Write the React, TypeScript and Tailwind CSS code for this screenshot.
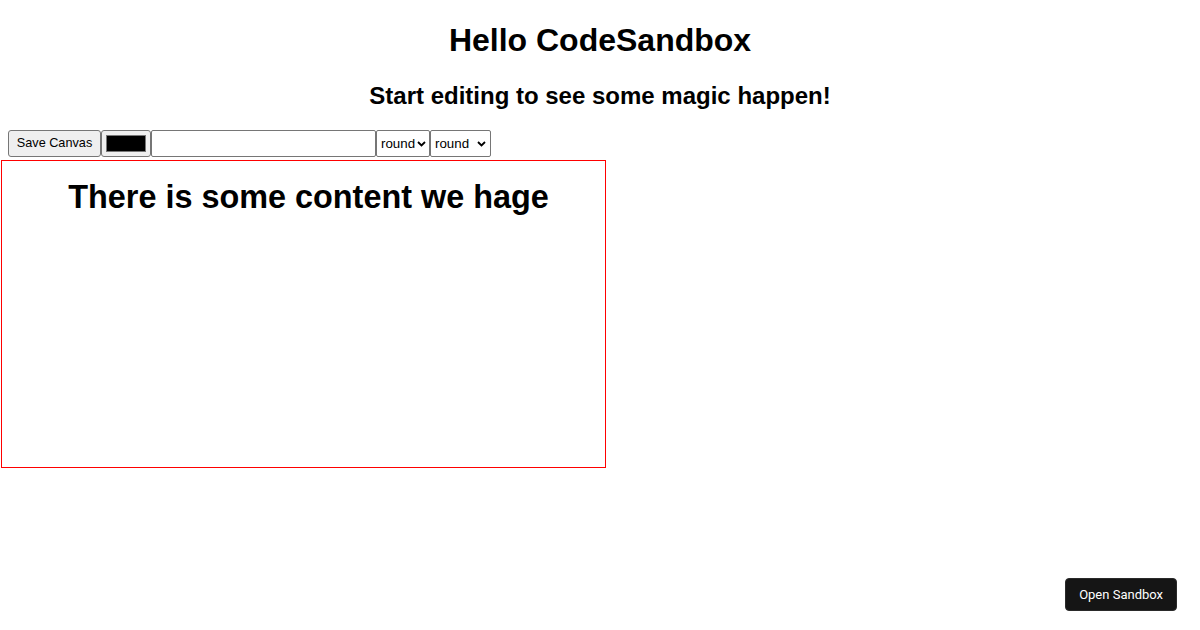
import { useState } from 'react'

function Chevron() {
  return (
    <svg width="9" height="6" viewBox="0 0 9 6" className="pointer-events-none">
      <path d="M1 1l3.5 3.5L8 1" fill="none" stroke="black" strokeWidth="1.8" />
    </svg>
  )
}

export default function App() {
  const [color, setColor] = useState('#000000')
  const [text, setText] = useState('')
  const [join, setJoin] = useState('round')
  const [cap, setCap] = useState('round')

  return (
    <div className="min-h-[630px] bg-white text-black font-['Liberation_Sans',Arial,sans-serif]">
      <div className="pt-[22px] text-center">
        <h1 className="text-[32px] font-bold leading-[37px]">Hello CodeSandbox</h1>
        <h2 className="mt-[23px] text-[24px] font-bold leading-[28px]">Start editing to see some magic happen!</h2>
      </div>

      <div className="mt-[20px] flex items-stretch h-[27px] pl-[8px] text-[13.33px]">
        <button className="w-[93px] whitespace-nowrap border border-[#767676] rounded-[3px] bg-[#efefef] px-0 text-[12.7px]">
          Save Canvas
        </button>
        <label className="w-[50px] border border-[#767676] rounded-[3px] bg-[#efefef] flex items-center justify-center">
          <span className="block w-[40px] h-[17px] border border-[#777]" style={{ backgroundColor: color }} />
          <input type="color" value={color} onChange={(e) => setColor(e.target.value)} className="hidden" />
        </label>
        <input
          value={text}
          onChange={(e) => setText(e.target.value)}
          className="w-[225px] border border-[#767676] rounded-[2px] px-[2px] outline-none"
        />
        <div className="relative w-[54px] border border-[#767676] rounded-[2px] flex items-center">
          <select
            value={join}
            onChange={(e) => setJoin(e.target.value)}
            className="appearance-none w-full h-full bg-transparent pl-[4px] outline-none"
          >
            <option>round</option>
            <option>bevel</option>
            <option>miter</option>
          </select>
          <span className="absolute right-[3px] top-[10px]">
            <Chevron />
          </span>
        </div>
        <div className="relative w-[61px] border border-[#767676] rounded-[2px] flex items-center">
          <select
            value={cap}
            onChange={(e) => setCap(e.target.value)}
            className="appearance-none w-full h-full bg-transparent pl-[4px] outline-none"
          >
            <option>round</option>
            <option>butt</option>
            <option>square</option>
          </select>
          <span className="absolute right-[4px] top-[10px]">
            <Chevron />
          </span>
        </div>
      </div>

      <div className="mt-[3px] ml-[1px] w-[605px] h-[308px] border border-solid border-[#ff0000]">
        <h1 className="pt-[18px] pl-[10px] text-center text-[32.4px] font-bold leading-[37px]">
          There is some content we hage
        </h1>
      </div>

      <button className="fixed right-[23px] bottom-[19px] h-[33px] px-[13px] rounded-[4px] bg-[#151515] border border-[#2a2a2a] text-white text-[13px] font-['Roboto',sans-serif]">
        Open Sandbox
      </button>
    </div>
  )
}
